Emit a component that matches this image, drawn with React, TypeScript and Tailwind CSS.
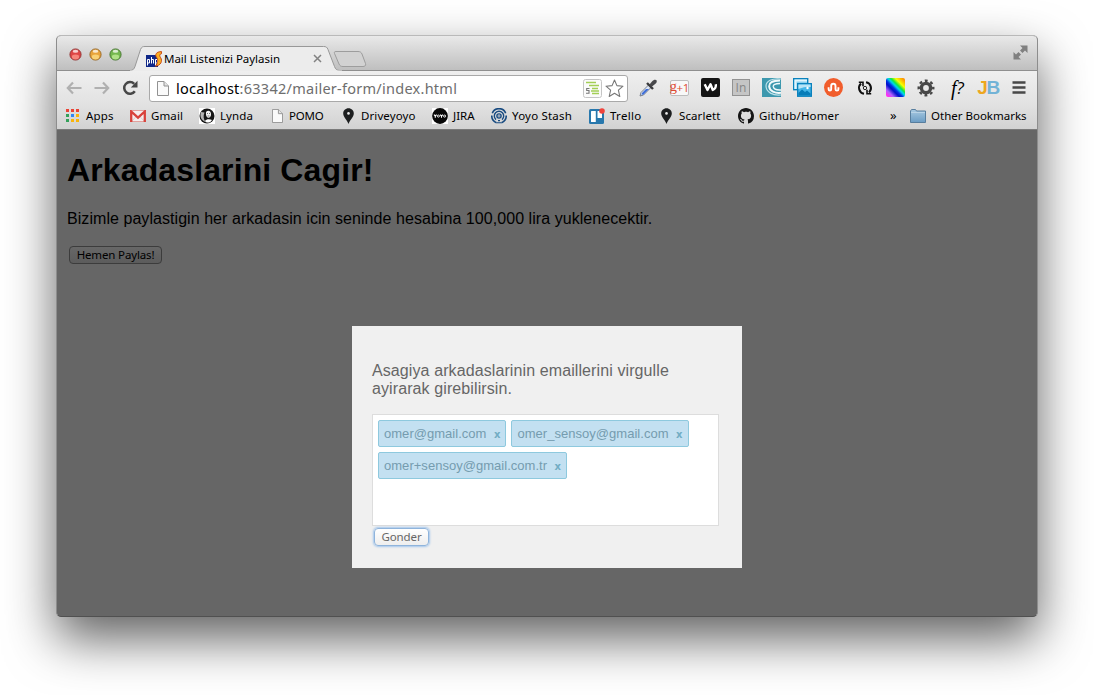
import React from "react";

type Kids = { children?: React.ReactNode };

function TrafficLight({ color, ring, light }: { color: string; ring: string; light: string }) {
  return (
    <svg width="13" height="13" viewBox="0 0 13 13">
      <circle cx="6.5" cy="6.5" r="5.6" fill={color} stroke={ring} strokeWidth="0.9" />
      <ellipse cx="6.5" cy="9" rx="3.6" ry="2.4" fill={light} opacity="0.75" />
      <ellipse cx="6.5" cy="3.2" rx="2.8" ry="1.5" fill="#fff" opacity="0.75" />
    </svg>
  );
}

function PhpStormIcon() {
  return (
    <svg width="16" height="16" viewBox="0 0 16 16">
      <rect x="0" y="4" width="12" height="12" fill="#0f2788" />
      <path d="M1.500 14.500V8.500h2v3.500h-2M5.500 6v6.500M5.500 8.500h2v4M9.500 14.500V8.500h2v3.500h-2" fill="none" stroke="#fff" strokeWidth="1" />
      <path d="M15.500 0.600C10.500 0.600 8.500 3.500 10.500 6.300C12.200 8.600 12.300 11.500 9.500 15.200C15 14.500 16.800 9.800 14.600 6.600C13.200 4.600 13.400 3.200 15.500 2.700Z" fill="#fbb024" stroke="#c4400f" strokeWidth="0.900" />
    </svg>
  );
}

function PageIcon({ w, h }: { w: number; h: number }) {
  return (
    <svg width={w} height={h} viewBox="0 0 12 15" preserveAspectRatio="none">
      <path d="M0.500 0.500H7L11.500 5V14.500H0.500Z" fill="#fafafa" stroke="#929292" />
      <path d="M7 0.500V5H11.500" fill="#e4e4e4" stroke="#929292" />
    </svg>
  );
}

function PinIcon() {
  return (
    <svg width="11" height="16" viewBox="0 0 11 16">
      <path d="M5.500 0.300C2.500 0.300 0.200 2.600 0.200 5.400C0.200 9 4 11.500 5.500 16C7 11.500 10.800 9 10.800 5.400C10.800 2.600 8.500 0.300 5.500 0.300Z" fill="#1d1f20" />
      <circle cx="5.500" cy="5.400" r="1.300" fill="#ececec" />
    </svg>
  );
}

function AppsIcon() {
  const colors = ["#ea4335", "#ea4335", "#ea4335", "#34a15a", "#2f86f6", "#f9b50b", "#34a15a", "#f9b50b", "#f9b50b"];
  return (
    <svg width="13" height="13" viewBox="0 0 13 13">
      {colors.map((c, i) => (
        <rect key={i} x={(i % 3) * 5} y={Math.floor(i / 3) * 5} width="3" height="3" fill={c} />
      ))}
    </svg>
  );
}

function GmailIcon() {
  return (
    <svg width="16" height="12" viewBox="0 0 16 12">
      <rect width="16" height="12" rx="1" fill="#f5eeee" />
      <path d="M0 0.500H16M0 11.500H16" stroke="#dd8d88" strokeWidth="0.800" />
      <path d="M2 11L6.500 6M14 11L9.500 6" stroke="#d9c5c5" strokeWidth="0.800" />
      <path d="M1.200 12V1.500L8 7.600L14.800 1.500V12" fill="none" stroke="#d8423b" strokeWidth="2.300" />
    </svg>
  );
}

function LyndaIcon() {
  return (
    <svg width="16" height="16" viewBox="0 0 16 16">
      <rect width="16" height="16" fill="#fff" />
      <circle cx="8" cy="8" r="7.500" fill="#161616" />
      <path d="M2 4C0.500 8 2 12.500 6.500 14C4.500 11 4 8 5.500 4.500Z" fill="#b5b5b5" />
      <path d="M7 4C9 1.500 12.500 3 12 7C11.800 9 10 10.500 8.500 9.500C7 8.500 6.800 6 7 4Z" fill="#f4f4f4" />
      <path d="M6 13C7 11 11 11 13 12C11.500 15 7.500 15.500 6 13Z" fill="#fff" />
      <path d="M8 5.500h1M10 5.500h1M8.500 8h2" stroke="#444" strokeWidth="0.700" />
    </svg>
  );
}

function YoyoIcon() {
  return (
    <svg width="16" height="16" viewBox="0 0 16 16">
      <rect width="16" height="16" fill="#fff" />
      <circle cx="8" cy="8" r="7.900" fill="#080808" />
      <path d="M2 6.700L3.300 8.200L4.600 6.700M3.300 8V9.700M8.200 6.700L9.500 8.200L10.800 6.700M9.500 8V9.700" fill="none" stroke="#fff" strokeWidth="1.100" />
      <rect x="5.400" y="7.100" width="2" height="2" rx="0.800" fill="none" stroke="#fff" strokeWidth="1" />
      <rect x="11.600" y="7.100" width="2" height="2" rx="0.800" fill="none" stroke="#fff" strokeWidth="1" />
    </svg>
  );
}

function StashIcon() {
  return (
    <svg width="16" height="16" viewBox="0 0 16 16" fill="none" stroke="#174a80">
      <path d="M1.300 5.200A7.200 7.200 0 0 1 14.700 5.200M0.800 7.500A7.200 7.200 0 0 0 5.500 14.700M15.200 7.500A7.200 7.200 0 0 1 10.500 14.700" strokeWidth="1.600" />
      <path d="M5 11.600A4.700 4.700 0 1 1 11 11.600" strokeWidth="1.400" />
      <circle cx="8" cy="8" r="2.100" strokeWidth="1.400" />
      <path d="M5.500 14.800H10.500M7 12.600H9" strokeWidth="1.100" />
      <circle cx="8" cy="8" r="0.700" fill="#174a80" stroke="none" />
    </svg>
  );
}

function TrelloIcon() {
  return (
    <svg width="16" height="16" viewBox="0 0 16 16">
      <rect x="0" y="1" width="15" height="15" rx="1.500" fill="#2878ad" />
      <rect x="2" y="3" width="4.800" height="11" rx="0.500" fill="#fff" />
      <rect x="8.500" y="3" width="4.500" height="7" rx="0.500" fill="#fff" />
      <circle cx="13" cy="3" r="2.800" fill="#f0443c" />
    </svg>
  );
}

function GithubIcon() {
  return (
    <svg width="16" height="16" viewBox="0 0 16 16" fill="#151515">
      <path d="M8 0C3.580 0 0 3.580 0 8c0 3.540 2.290 6.530 5.470 7.590.4.070.55-.17.55-.38 0-.19-.01-.82-.01-1.490-2.010.37-2.530-.49-2.690-.94-.09-.23-.48-.94-.82-1.130-.28-.15-.68-.52-.01-.53.63-.01 1.080.58 1.230.82.72 1.210 1.870.87 2.330.66.07-.52.28-.87.51-1.070-1.780-.2-3.640-.89-3.640-3.950 0-.87.31-1.590.82-2.150-.08-.2-.36-1.020.08-2.120 0 0 .67-.21 2.200.82.64-.18 1.320-.27 2-.27s1.360.09 2 .27c1.530-1.040 2.200-.82 2.200-.82.44 1.100.16 1.920.08 2.120.51.56.82 1.270.82 2.150 0 3.070-1.870 3.750-3.650 3.950.29.25.54.73.54 1.480 0 1.070-.01 1.930-.01 2.200 0 .21.15.46.55.38A8.010 8.010 0 0016 8c0-4.420-3.580-8-8-8z" />
    </svg>
  );
}

function FolderIcon() {
  return (
    <svg width="16" height="14" viewBox="0 0 16 14">
      <defs>
        <linearGradient id="folder" x1="0" y1="0" x2="0" y2="1">
          <stop offset="0" stopColor="#a9cae2" />
          <stop offset="1" stopColor="#6b9cc4" />
        </linearGradient>
      </defs>
      <path d="M0.500 13.500V2L1.500 0.500H5.500L6.500 2H15.500V13.500Z" fill="url(#folder)" stroke="#587e9e" />
      <path d="M1 3.500H15" stroke="#b9d3e6" />
    </svg>
  );
}

function Arrow({ flip }: { flip?: boolean }) {
  return (
    <svg width="16" height="14" viewBox="0 0 16 14" className={flip ? "rotate-180" : ""}>
      <path d="M7 1.500L1.800 7L7 12.500M2 7H15.500" fill="none" stroke="#b0b0b0" strokeWidth="2.200" />
    </svg>
  );
}

function Reload() {
  return (
    <svg width="16" height="16" viewBox="0 0 16 16">
      <path d="M12.800 11.200A5.800 5.800 0 1 1 12.200 3.900" fill="none" stroke="#474747" strokeWidth="2.500" />
      <path d="M15.500 0.800V7.500H8.800Z" fill="#474747" />
    </svg>
  );
}

function ReaderBadge() {
  return (
    <svg width="19" height="19" viewBox="0 0 19 19">
      <rect x="0.500" y="0.500" width="18" height="18" rx="2" fill="#fbfbfb" stroke="#c5c5c5" />
      <path d="M3 3.500H13M6 6.500H16M9 9.500H15M8 12H16M9 14.500H16" stroke="#a3cf55" strokeWidth="1.500" />
      <path d="M6.500 9.500H3.700V11.500H6V14.300H3" fill="none" stroke="#777" strokeWidth="1.100" />
    </svg>
  );
}

function Star() {
  return (
    <svg width="19" height="19" viewBox="0 0 19 19">
      <path d="M9.500 1L11.900 6.600L18 7.200L13.400 11.200L14.800 17.500L9.500 14.200L4.200 17.500L5.600 11.200L1 7.200L7.100 6.600Z" fill="#fff" stroke="#777" strokeWidth="1.100" strokeLinejoin="round" />
    </svg>
  );
}

function Ext({ children }: Kids) {
  return <div className="flex w-[30.920px] shrink-0 items-center justify-center">{children}</div>;
}

function Extensions() {
  return (
    <div className="flex h-[28px] items-center">
      <Ext>
        <svg width="18" height="18" viewBox="0 0 18 18">
          <path d="M1 17L2 13.500L10 5.500L12.500 8L4.500 16Z" fill="#dfe7f5" stroke="#6b7380" strokeWidth="0.900" />
          <path d="M2.500 15.800L3 14L7 10H10L4.500 15.500Z" fill="#3f6fd8" />
          <path d="M8 4L14 10" stroke="#3a3a3c" strokeWidth="2.400" />
          <path d="M10.500 5.500L13 2.500C14.500 0.500 16.800 0.300 17.500 1.200C18.200 2.500 17.500 4.500 15.500 5.500L12.500 8Z" fill="#48484b" />
        </svg>
      </Ext>
      <Ext>
        <div className="flex h-4 w-[19px] items-center justify-center rounded-[2px] border border-[#bdbdbd] bg-[#f8f8f8] font-['Open_Sans',sans-serif] text-[11.500px] leading-none tracking-[-0.500px] text-[#dd4b32]">
          <span className="-mt-[3px] font-['Liberation_Serif',serif] text-[15px] leading-[12px]">g</span>+1
        </div>
      </Ext>
      <Ext>
        <svg width="19" height="19" viewBox="0 0 19 19">
          <rect width="19" height="19" rx="2" fill="#151515" />
          <path d="M3.700 6.300L6.500 12L9.500 6.300L11.800 12C14 11 15.200 9 14.800 6.300" fill="none" stroke="#fff" strokeWidth="2.400" strokeLinejoin="round" />
        </svg>
      </Ext>
      <Ext>
        <div className="flex h-[17px] w-[18px] items-center justify-center border border-[#929292] bg-[#c5c5c5] font-['Open_Sans',sans-serif] text-[12px] leading-none text-[#858585]">
          In
        </div>
      </Ext>
      <Ext>
        <svg width="19" height="19" viewBox="0 0 19 19">
          <rect width="19" height="19" fill="#3d98ae" />
          <path d="M19 1C10 0 4 3 4 8C4 14 11 18 19 17" fill="none" stroke="#bfe2ea" strokeWidth="1.200" />
          <path d="M18 2.500C10 2.500 7 5 7.200 8.500C7.500 13 13 15.500 19 14.800" fill="none" stroke="#f2fafb" strokeWidth="2" />
          <path d="M18 5.500C13 5.500 11 6.500 11.300 8.700C11.700 11 15 12.300 19 12" fill="none" stroke="#f2fafb" strokeWidth="1.400" />
        </svg>
      </Ext>
      <Ext>
        <svg width="19" height="19" viewBox="0 0 19 19">
          <rect x="0.700" y="0.700" width="14" height="11" fill="#8bd0ee" stroke="#0b82bd" strokeWidth="1.400" />
          <path d="M1.400 1.400H14V3.500H3.500V11H1.400Z" fill="#e4f5fc" />
          <rect x="4.700" y="5.700" width="13.600" height="12.500" fill="#45b6e8" stroke="#0b82bd" strokeWidth="1.400" />
          <path d="M5.400 6.400H17.600V9C14 9 12 8.500 5.400 11Z" fill="#b9e4f6" />
          <path d="M5.400 15L9 11.500L12 14L14 12.500L17.600 15.500V17.500H5.400Z" fill="#067cb8" />
          <circle cx="14.500" cy="10" r="1.200" fill="#fff" />
        </svg>
      </Ext>
      <Ext>
        <svg width="19" height="19" viewBox="0 0 19 19">
          <circle cx="9.500" cy="9.500" r="9.500" fill="#f15d2c" />
          <path d="M4.600 9.300V11.200A1.300 1.300 0 0 0 7.200 11.200V7.900A2.150 2.150 0 0 1 11.500 7.900V11.200A1.450 1.450 0 0 0 14.400 11.200V9.300" fill="none" stroke="#fff" strokeWidth="1.900" />
        </svg>
      </Ext>
      <Ext>
        <svg width="16" height="16" viewBox="0 0 16 16" fill="none" stroke="#101010">
          <path d="M7 13.800A5.900 5.900 0 0 1 4 3.600M9 2.200A5.900 5.900 0 0 1 12 12.400" strokeWidth="2" />
          <path d="M1.800 2.200H6V6.200M14.200 13.800H10V9.800" strokeWidth="1.600" />
          <circle cx="8" cy="8" r="1.700" strokeWidth="0.900" />
        </svg>
      </Ext>
      <Ext>
        <div className="h-[19px] w-[19px] rounded-[2px] bg-[linear-gradient(45deg,#ff30f0_8%,#b060ff_20%,#0010c8_36%,#0030e0_44%,#00d8f0_54%,#10e840_62%,#f8ff00_74%,#ff9000_94%)]" />
      </Ext>
      <Ext>
        <svg width="18" height="18" viewBox="0 0 18 18" fill="none" stroke="#484848">
          <circle cx="9" cy="9" r="4.600" strokeWidth="3.400" />
          <circle cx="9" cy="9" r="7.300" strokeWidth="2.400" strokeDasharray="2.867 2.867" strokeDashoffset="1.433" />
        </svg>
      </Ext>
      <Ext>
        <span className="font-['Liberation_Serif',serif] text-[20px] leading-none text-black italic">f</span>
        <span className="font-['Open_Sans',sans-serif] text-[17px] leading-none text-black italic">?</span>
      </Ext>
      <Ext>
        <span className="font-['Liberation_Sans',sans-serif] text-[19px] leading-none font-bold tracking-[-1.500px] text-[#eda71f]">J</span>
        <span className="font-['Liberation_Sans',sans-serif] text-[19px] leading-none font-bold tracking-[-1px] text-[#73b3d6]">B</span>
      </Ext>
      <Ext>
        <svg width="14" height="13" viewBox="0 0 14 13">
          <path d="M0.500 1.500H13.500M0.500 6.500H13.500M0.500 11.500H13.500" stroke="#484848" strokeWidth="2.600" />
        </svg>
      </Ext>
    </div>
  );
}

function Bookmark({ icon, label, className, text }: { icon: React.ReactNode; label: string; className: string; text: string }) {
  return (
    <div className={`flex shrink-0 items-center ${className}`}>
      {icon}
      <span className={`whitespace-nowrap ${text}`}>{label}</span>
    </div>
  );
}

function TabStrip() {
  return (
    <div className="flex h-[34px] shrink-0 rounded-t-[4px] bg-linear-to-b from-[#e9e9e9] to-[#bfbfbf]">
      <div className="flex w-[73px] shrink-0 items-center gap-[7px] pt-[2px] pl-[11.500px]">
        <TrafficLight color="#de4545" ring="#8f3535" light="#ff9b8d" />
        <TrafficLight color="#e8a33a" ring="#946422" light="#ffe08a" />
        <TrafficLight color="#74b84e" ring="#44722f" light="#c4f09a" />
      </div>
      <div className="relative h-[35px] w-[207px] shrink-0">
        <svg className="absolute inset-0" width="240" height="35" viewBox="0 1 240 35">
          <path d="M0 35.500C3 35.500 4 34 5 31.500L10.500 14.500C11.500 12 12.500 11.500 15 11.500H193.500C196 11.500 197 12 198 14.500L204.500 31.500C205.500 34 206.500 35.500 210 35.500V36.500H0Z" fill="#ececec" stroke="#989898" />
          <path d="M0 36H212" stroke="#ececec" strokeWidth="1.200" />
          <path d="M206 16.500H228C230 16.500 231 17 232 19L235.500 28.500C236 30.500 235 31.500 233 31.500H213C211 31.500 210 31 209 29L204.500 18.500C204 17 204.500 16.500 206 16.500Z" fill="#d2d2d2" stroke="#9d9d9d" />
        </svg>
        <div className="relative flex h-full items-center pt-[10px] pl-[16px]">
          <PhpStormIcon />
          <span className="ml-[2px] w-[149px] text-[11.500px] tracking-[-0.030px] whitespace-nowrap text-black">Mail Listenizi Paylasin</span>
          <svg width="9" height="9" viewBox="0 0 9 9">
            <path d="M1 1L8 8M8 1L1 8" stroke="#828282" strokeWidth="1.500" />
          </svg>
        </div>
      </div>
      <div className="flex flex-1 justify-end pt-[9px] pr-[9px]">
        <svg width="15" height="15" viewBox="0 0 15 15" fill="#808080">
          <path d="M7 0.500H14.500V8L12 5.500L9.500 8L7 5.500L9.500 3ZM0.500 7L3 9.500L5.500 7L8 9.500L5.500 12L8 14.500H0.500Z" />
        </svg>
      </div>
    </div>
  );
}

function Toolbar() {
  return (
    <div className="flex h-[34px] shrink-0 items-center border-t border-[#8f8f8f] bg-linear-to-b from-[#efefef] to-[#e2e2e2] pl-[9px]">
      <div className="flex w-[83px] items-center">
        <Arrow />
        <div className="ml-[12px] flex">
          <Arrow flip />
        </div>
        <div className="ml-[12px]">
          <Reload />
        </div>
      </div>
      <div className="mt-[2px] flex h-[27px] w-[479px] shrink-0 items-center rounded-[3px] border border-[#a9a9a9] bg-white pl-[7px]">
        <PageIcon w={12} h={15} />
        <span className="ml-[7px] flex-1 text-[14.500px] tracking-[0.260px] whitespace-nowrap text-[#6e6e6e]">
          <span className="text-black">localhost</span>:63342/mailer-form/index.html
        </span>
        <ReaderBadge />
        <div className="mr-[3px] ml-[3px]">
          <Star />
        </div>
      </div>
      <div className="ml-[4.800px]">
        <Extensions />
      </div>
    </div>
  );
}

function BookmarksBar() {
  return (
    <div className="flex h-[26px] shrink-0 items-center border-b border-[#7a7a7a] bg-linear-to-b from-[#e2e2e2] to-[#d2d2d2] pb-[2px] pl-[9px] text-[11.500px] leading-none text-black">
      <Bookmark className="w-[64px] gap-[7px]" icon={<AppsIcon />} label="Apps" text="tracking-[0.200px]" />
      <Bookmark className="w-[69px] gap-[5px]" icon={<GmailIcon />} label="Gmail" text="tracking-[0.100px]" />
      <Bookmark className="w-[73px] gap-[5px]" icon={<LyndaIcon />} label="Lynda" text="tracking-[0.080px]" />
      <Bookmark className="w-[71px] gap-[6px]" icon={<PageIcon w={11} h={14} />} label="POMO" text="tracking-[-0.200px]" />
      <Bookmark className="w-[89px] gap-[7px]" icon={<PinIcon />} label="Driveyoyo" text="tracking-[0.100px]" />
      <Bookmark className="w-[59px] gap-[5px]" icon={<YoyoIcon />} label="JIRA" text="tracking-[0px]" />
      <Bookmark className="w-[98px] gap-[5px]" icon={<StashIcon />} label="Yoyo Stash" text="tracking-[0.200px]" />
      <Bookmark className="w-[72px] gap-[5px]" icon={<TrelloIcon />} label="Trello" text="tracking-[0.300px]" />
      <Bookmark className="w-[77px] gap-[7px]" icon={<PinIcon />} label="Scarlett" text="tracking-[0.100px]" />
      <Bookmark className="w-[152px] gap-[5px]" icon={<GithubIcon />} label="Github/Homer" text="tracking-[0.130px]" />
      <span className="w-[20px] text-[13px]">»</span>
      <Bookmark className="gap-[5px]" icon={<FolderIcon />} label="Other Bookmarks" text="tracking-[0px]" />
    </div>
  );
}

function Tag({ children }: Kids) {
  return (
    <div className="flex h-[27px] items-center rounded-[2px] border border-[#8ec9de] bg-[#c3e0f1] px-[5px] text-[13px] text-[#759caf]">
      <span className="tracking-[0.030px]">{children}</span>
      <span className="ml-[7.500px] pt-px font-['DejaVu_Sans',sans-serif] text-[10px] font-bold text-[#72adc4]">x</span>
    </div>
  );
}

function Modal() {
  return (
    <div className="absolute top-[196px] left-[295px] h-[242px] w-[390px] bg-[#f0f0f0] px-[20px] pt-[36px] text-[#666]">
      <p className="w-[347px] text-[16px] leading-[18px] tracking-[0.100px]">
        Asagiya arkadaslarinin emaillerini virgulle
        <br />
        ayirarak girebilirsin.
      </p>
      <div className="mt-[16px] flex h-[112px] w-[347px] flex-wrap content-start gap-[5px] border border-[#ddd] bg-white p-[5px]">
        <Tag>omer@gmail.com</Tag>
        <Tag>omer_sensoy@gmail.com</Tag>
        <Tag>omer+sensoy@gmail.com.tr</Tag>
      </div>
      <button className="mt-[2px] ml-[2px] flex h-[18px] w-[55px] items-center justify-center rounded-[4px] border border-[#8fb4dc] bg-linear-to-b from-white to-[#eee] font-['Noto_Sans',sans-serif] text-[11.500px] leading-none tracking-[-0.100px] text-[#666] shadow-[0_0_2px_1px_#a5c7ec]">
        Gonder
      </button>
    </div>
  );
}

export default function App() {
  return (
    <div className="h-[695px] w-[1094px] overflow-hidden bg-white pt-[35px] pl-[56px] font-['Noto_Sans','Open_Sans',sans-serif]">
      <div className="flex h-[582px] w-[982px] flex-col rounded-[5px] border border-x-[#8d8d8d] border-t-[#b9b9b9] border-b-[#505050] bg-[#666] shadow-[0_22px_50px_rgba(0,0,0,0.620)]">
        <TabStrip />
        <Toolbar />
        <BookmarksBar />
        <div className="relative flex-1 px-[10px] font-['Liberation_Sans',Arial,sans-serif] text-black">
          <h1 className="pt-[22px] text-[32px] leading-[37px] font-bold tracking-[0.120px]">Arkadaslarini Cagir!</h1>
          <p className="mt-[21px] text-[16px] leading-[18px] tracking-[0.055px]">
            Bizimle paylastigin her arkadasin icin seninde hesabina 100,000 lira yuklenecektir.
          </p>
          <button className="mt-[18px] ml-[2px] flex h-[18px] w-[93px] items-center justify-center rounded-[4px] border border-[#3c3c3c] bg-linear-to-b from-[#676767] to-[#5c5c5c] font-['Noto_Sans',sans-serif] text-[11.500px] leading-none tracking-[-0.150px] text-black">
            Hemen Paylas!
          </button>
          <Modal />
        </div>
      </div>
    </div>
  );
}
